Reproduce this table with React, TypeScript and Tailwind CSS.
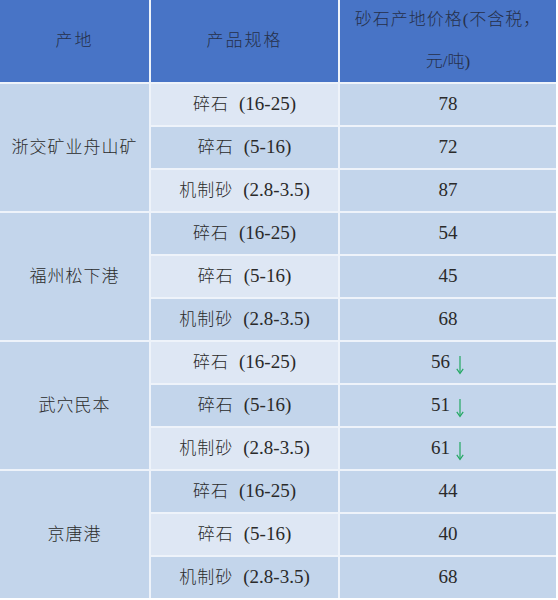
import React from "react";

type Row = { name: string; size: string; price: string; down?: boolean };
type Group = { origin: string; rows: Row[] };

const groups: Group[] = [
  {
    origin: "浙交矿业舟山矿",
    rows: [
      { name: "碎石", size: "(16-25)", price: "78" },
      { name: "碎石", size: "(5-16)", price: "72" },
      { name: "机制砂", size: "(2.8-3.5)", price: "87" },
    ],
  },
  {
    origin: "福州松下港",
    rows: [
      { name: "碎石", size: "(16-25)", price: "54" },
      { name: "碎石", size: "(5-16)", price: "45" },
      { name: "机制砂", size: "(2.8-3.5)", price: "68" },
    ],
  },
  {
    origin: "武穴民本",
    rows: [
      { name: "碎石", size: "(16-25)", price: "56", down: true },
      { name: "碎石", size: "(5-16)", price: "51", down: true },
      { name: "机制砂", size: "(2.8-3.5)", price: "61", down: true },
    ],
  },
  {
    origin: "京唐港",
    rows: [
      { name: "碎石", size: "(16-25)", price: "44" },
      { name: "碎石", size: "(5-16)", price: "40" },
      { name: "机制砂", size: "(2.8-3.5)", price: "68" },
    ],
  },
];

function DownArrow() {
  return (
    <svg width="10" height="20" viewBox="0 0 10 20" className="ml-[5px] mt-[5px]">
      <path d="M5 1 V18" stroke="#22a862" strokeWidth="1.2" fill="none" />
      <path d="M1.8 13.8 L5 18.5 L8.2 13.8" stroke="#22a862" strokeWidth="1.2" fill="none" />
    </svg>
  );
}

export default function App() {
  const cells: React.ReactNode[] = [];
  let rowIndex = 0;
  groups.forEach((g, gi) => {
    g.rows.forEach((r, ri) => {
      rowIndex += 1;
      const light = rowIndex % 2 === 1;
      if (ri === 0) {
        cells.push(
          <div
            key={`o-${gi}`}
            className="row-span-3 flex items-center justify-center bg-[#c3d5eb] text-[17px] font-light tracking-[1px] text-[#2a2a2a]"
          >
            {g.origin}
          </div>
        );
      }
      cells.push(
        <div
          key={`s-${gi}-${ri}`}
          className={`flex items-center justify-center text-[#2a2a2a] ${
            light ? "bg-[#dee7f4]" : "bg-[#c3d5eb]"
          }`}
        >
          <span className="text-[17px] font-light tracking-[1px]">{r.name}</span>
          <span className="ml-[10px] text-[19px]">{r.size}</span>
        </div>
      );
      cells.push(
        <div
          key={`p-${gi}-${ri}`}
          className="flex items-center justify-center bg-[#c3d5eb] text-[19px] text-[#2a2a2a]"
        >
          {r.price}
          {r.down && <DownArrow />}
        </div>
      );
    });
  });

  return (
    <div className="w-[558px] h-[600px] bg-white overflow-hidden" style={{ fontFamily: '"Liberation Serif", "Noto Sans CJK SC", serif' }}>
      <div className="grid w-[556px] grid-cols-[149px_187px_216px] grid-rows-[82px_repeat(12,41px)] gap-[2px] bg-[#eef3fa]">
        <div className="flex items-center justify-center bg-[#4874c6] text-[17px] font-light tracking-[2px] text-[#26304a]">
          产地
        </div>
        <div className="flex items-center justify-center bg-[#4874c6] text-[17px] font-light tracking-[2px] text-[#26304a]">
          产品规格
        </div>
        <div className="flex flex-col items-center justify-center bg-[#4874c6] text-[17px] font-light leading-[42px] text-[#26304a]">
          <div className="tracking-[1px]">砂石产地价格(不含税，</div>
          <div>元/吨)</div>
        </div>
        {cells}
      </div>
    </div>
  );
}
